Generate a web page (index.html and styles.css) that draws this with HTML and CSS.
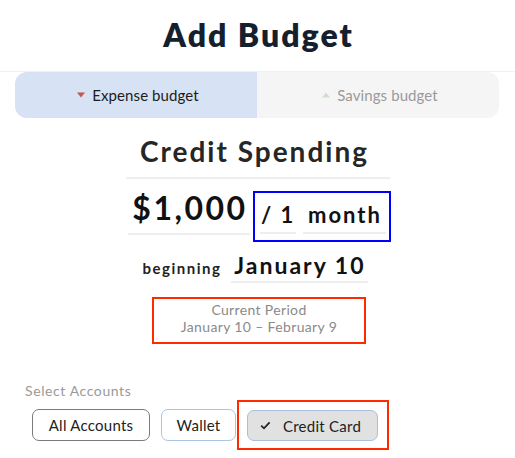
FILE: index.html
```html
<!DOCTYPE html>
<html lang="en">
<head>
<meta charset="utf-8">
<title>Add Budget</title>
<link rel="stylesheet" href="styles.css">
</head>
<body>
<header class="title-bar">
  <h1 class="title">Add Budget</h1>
</header>
<div class="segment">
  <div class="seg-item seg-active">
    <svg class="tri" width="8" height="6" viewBox="0 0 8 6"><path d="M0 0.5H8L4 5.5Z" fill="#c4574f"/></svg>
    <span>Expense budget</span>
  </div>
  <div class="seg-item seg-idle">
    <svg class="tri" width="8" height="6" viewBox="0 0 8 6"><path d="M0 5.5H8L4 0.5Z" fill="#cfe0cb"/></svg>
    <span>Savings budget</span>
  </div>
</div>
<main class="form">
  <div class="field name-field">Credit Spending</div>
  <div class="amount-row">
    <div class="field amount">$1,000</div>
    <div class="period-box">
      <div class="field per">/ 1</div>
      <div class="field unit">month</div>
    </div>
  </div>
  <div class="begin-row">
    <span class="begin-label">beginning</span>
    <span class="field date">January 10</span>
  </div>
  <div class="current-period">
    <div>Current Period</div>
    <div>January 10 – February 9</div>
  </div>
</main>
<section class="accounts">
  <div class="accounts-label">Select Accounts</div>
  <div class="account-row">
    <button class="acct acct-all">All Accounts</button>
    <button class="acct acct-wallet">Wallet</button>
    <div class="highlight">
      <button class="acct acct-selected">
        <svg class="check" width="11" height="9" viewBox="0 0 11 9"><path d="M1.2 4.6L4 7.3L9.6 1.4" fill="none" stroke="#222" stroke-width="1.8"/></svg>
        <span>Credit Card</span>
      </button>
    </div>
  </div>
</section>
</body>
</html>
```

FILE: styles.css
```css
* { box-sizing: border-box; }
html, body { margin: 0; padding: 0; background: #fff; }
body {
  font-family: Lato, "Open Sans", "Liberation Sans", sans-serif;
  color: #1a1a1a;
  width: 515px;
}
.title-bar {
  height: 72px;
  border-bottom: 1px solid #f2f2f2;
  display: flex;
  justify-content: center;
}
.title {
  margin: 0;
  padding-top: 15px;
  padding-left: 2px;
  font-size: 32px;
  line-height: 40px;
  font-weight: 800;
  color: #15202e;
  letter-spacing: 2px;
}
.segment {
  margin: 0 16px 0 15px;
  height: 46px;
  border-radius: 12px;
  overflow: hidden;
  display: flex;
}
.seg-item {
  flex: 1;
  display: flex;
  align-items: center;
  justify-content: center;
  gap: 7px;
  font-size: 15px;
  padding-left: 4px;
  letter-spacing: 0.1px;
}
.seg-active { background: #d7e2f4; color: #1c1c1c; }
.seg-idle { background: #f5f5f5; color: #9a9a9a; }
.tri { display: block; }

.form {
  display: flex;
  flex-direction: column;
  align-items: center;
}
.field {
  font-weight: 700;
  color: #1b1b1b;
  border-bottom: 2px solid #eeeeee;
  text-align: center;
}
.name-field {
  margin-top: 16px;
  width: 264px;
  font-size: 28px;
  line-height: 34px;
  padding-bottom: 9px;
  color: #262626;
  padding-right: 6px;
  letter-spacing: 2px;
}
.amount-row {
  margin-top: 11px;
  display: flex;
  align-items: flex-end;
  gap: 3px;
  margin-left: 4px;
}
.amount {
  width: 122px;
  font-size: 32px;
  line-height: 36px;
  padding-bottom: 7px;
  margin-bottom: 7px;
  color: #111;
  letter-spacing: 2.5px;
  padding-left: 2px;
}
.period-box {
  border: 2px solid #0000ff;
  padding: 9px 3px 6px 5px;
  display: flex;
  gap: 7px;
}
.per, .unit {
  font-size: 22px;
  line-height: 26px;
  padding-bottom: 4px;
  color: #111;
  letter-spacing: 2px;
}
.per { width: 36px; text-align: left; padding-left: 1px; }
.unit { width: 83px; padding-left: 1px; }

.begin-row {
  margin-top: 9px;
  display: flex;
  align-items: baseline;
  gap: 10px;
  margin-right: 4px;
}
.begin-label {
  font-size: 15px;
  font-weight: 700;
  color: #222;
  letter-spacing: 1.5px;
}
.date {
  width: 137px;
  font-size: 23px;
  line-height: 28px;
  padding-bottom: 2px;
  color: #111;
  letter-spacing: 2px;
}
.current-period {
  margin-top: 14px;
  width: 214px;
  border: 2px solid #ff2a00;
  padding: 2px 0 7px;
  text-align: center;
  font-size: 14px;
  line-height: 17px;
  color: #8a8a8a;
  margin-left: 3px;
  letter-spacing: 0.35px;
}
.accounts {
  margin-top: 38px;
}
.accounts-label {
  padding-left: 25px;
  font-size: 14px;
  line-height: 17px;
  color: #999;
  letter-spacing: 0.6px;
}
.account-row {
  margin-top: 1px;
  padding-left: 32px;
  display: flex;
  align-items: center;
}
.acct {
  font-family: inherit;
  font-size: 15px;
  height: 32px;
  border-radius: 7px;
  background: #fff;
  color: #222;
  display: flex;
  align-items: center;
  justify-content: center;
  gap: 12px;
  padding: 0;
  letter-spacing: 0.25px;
}
.acct-all {
  width: 118px;
  border: 1px solid #7b7b7b;
}
.acct-wallet {
  margin-left: 11px;
  width: 75px;
  border: 1px solid #aac6e2;
}
.highlight {
  margin-left: 1px;
  border: 2px solid #ff2a00;
  padding: 8px 9px 7px 8px;
}
.acct-selected {
  width: 131px;
  border: 1px solid #a9c0da;
  background: #e1e1e1;
  height: 31px;
  padding-right: 4px;
}
.check { display: block; }
```
